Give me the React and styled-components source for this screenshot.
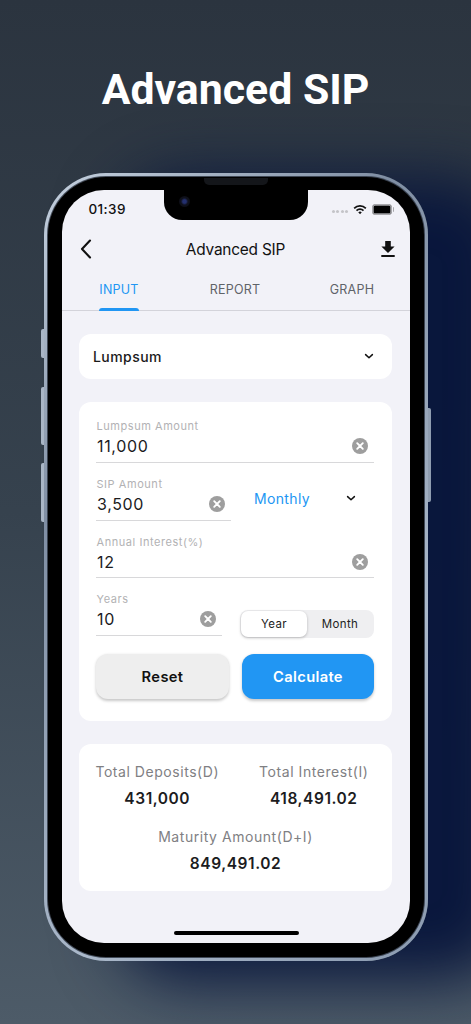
import React from 'react'
import styled, { createGlobalStyle } from 'styled-components'

const GlobalStyle = createGlobalStyle`
  html, body {
    margin: 0;
    padding: 0;
    background: #2d3640;
  }
  * {
    box-sizing: border-box;
  }
`

const BLUE = '#2196f3'

const ClearIcon = () => (
  <svg width='16' height='16' viewBox='0 0 16 16'>
    <circle cx='8' cy='8' r='8' fill='#9e9e9e' />
    <path d='M5.2 5.2l5.6 5.6M10.8 5.2l-5.6 5.6' stroke='#fff' strokeWidth='1.9' strokeLinecap='round' />
  </svg>
)

const Chevron = () => (
  <svg width='10' height='7' viewBox='0 0 10 7'>
    <path d='M1.6 1.6L5 4.8l3.4-3.2' fill='none' stroke='#111' strokeWidth='1.5' strokeLinecap='round' strokeLinejoin='round' />
  </svg>
)

const Field = ({ label, value, width }) => (
  <FieldBox $width={width}>
    <FieldLabel>{label}</FieldLabel>
    <FieldRow>
      <FieldValue>{value}</FieldValue>
      <ClearIcon />
    </FieldRow>
  </FieldBox>
)

const App = () => {
  return (
    <Page>
      <GlobalStyle />
      <Heading>Advanced SIP</Heading>
      <Frame>
        <VolumeKey $top={156} $height={29} />
        <VolumeKey $top={214} $height={58} />
        <VolumeKey $top={290} $height={59} />
        <PowerKey />
        <Bezel>
          <Speaker />
          <Screen>
            <Notch>
              <Camera />
            </Notch>
            <StatusBar>
              <Clock>01:39</Clock>
              <StatusIcons>
                <Signal>
                  <i /><i /><i /><i />
                </Signal>
                <svg width='14' height='11' viewBox='0 0 16 12'>
                  <path d='M0.6 3.9a10.4 10.4 0 0 1 14.8 0l-1.4 1.4a8.4 8.4 0 0 0-12 0z' fill='#111' />
                  <path d='M3.3 6.6a6.6 6.6 0 0 1 9.4 0l-1.4 1.4a4.6 4.6 0 0 0-6.6 0z' fill='#111' />
                  <path d='M6 9.2a2.9 2.9 0 0 1 4 0L8 11.4z' fill='#111' />
                </svg>
                <Battery />
              </StatusIcons>
            </StatusBar>
            <NavBar>
              <svg width='12' height='20' viewBox='0 0 12 20'>
                <path d='M10 1.5L2 10l8 8.5' fill='none' stroke='#111' strokeWidth='2.1' strokeLinecap='round' strokeLinejoin='round' />
              </svg>
              <NavTitle>Advanced SIP</NavTitle>
              <svg width='14' height='16' viewBox='0 0 14 16'>
                <path d='M4.2 0h5.6v5.6h3.8L7 12 .4 5.6h3.8z' fill='#111' />
                <rect x='0.3' y='14' width='13.4' height='2' fill='#111' />
              </svg>
            </NavBar>
            <Tabs>
              <Tab $active>
                INPUT
                <Indicator />
              </Tab>
              <Tab>REPORT</Tab>
              <Tab>GRAPH</Tab>
            </Tabs>
            <Content>
              <SelectCard>
                <SelectText>Lumpsum</SelectText>
                <Chevron />
              </SelectCard>
              <FormCard>
                <Field label='Lumpsum Amount' value='11,000' />
                <SplitRow>
                  <Field label='SIP Amount' value='3,500' width={135} />
                  <Frequency>
                    <FrequencyText>Monthly</FrequencyText>
                    <Chevron />
                  </Frequency>
                </SplitRow>
                <Field label='Annual Interest(%)' value='12' />
                <SplitRow>
                  <Field label='Years' value='10' width={126} />
                  <Segments>
                    <Segment $active>Year</Segment>
                    <Segment>Month</Segment>
                  </Segments>
                </SplitRow>
                <Actions>
                  <ActionButton>Reset</ActionButton>
                  <ActionButton $primary>Calculate</ActionButton>
                </Actions>
              </FormCard>
              <ResultCard>
                <Stat>
                  <StatLabel>Total Deposits(D)</StatLabel>
                  <StatValue>431,000</StatValue>
                </Stat>
                <Stat>
                  <StatLabel>Total Interest(I)</StatLabel>
                  <StatValue>418,491.02</StatValue>
                </Stat>
                <Stat $wide>
                  <StatLabel>Maturity Amount(D+I)</StatLabel>
                  <StatValue>849,491.02</StatValue>
                </Stat>
              </ResultCard>
            </Content>
            <HomeBar />
          </Screen>
        </Bezel>
      </Frame>
    </Page>
  )
}

const Page = styled.div`
  width: 471px;
  height: 1024px;
  overflow: hidden;
  padding-left: 44px;
  background: linear-gradient(180deg, #2b343f 0%, #36424e 50%, #4d5b68 100%);
  font-family: Inter, 'Noto Sans', sans-serif;
`

const Heading = styled.h1`
  margin: 0 0 0 -44px;
  height: 173px;
  padding-top: 64px;
  font-family: Roboto, sans-serif;
  font-size: 42.8px;
  line-height: 50px;
  font-weight: 700;
  color: #fff;
  text-align: center;
`

const Frame = styled.div`
  position: relative;
  width: 384px;
  height: 788px;
  padding: 4px;
  border-radius: 62px;
  background: linear-gradient(135deg, #c6d2e0 0%, #7f8ea3 30%, #aab8ca 70%, #8a9ab0 100%);
  box-shadow: 80px 12px 62px 8px rgba(8, 22, 60, 0.97);
`

const VolumeKey = styled.div`
  position: absolute;
  left: -3px;
  top: ${(p) => p.$top}px;
  width: 3px;
  height: ${(p) => p.$height}px;
  border-radius: 2px 0 0 2px;
  background: #a9b6c6;
`

const PowerKey = styled.div`
  position: absolute;
  right: -3px;
  top: 235px;
  width: 3px;
  height: 94px;
  border-radius: 0 2px 2px 0;
  background: #8f9db0;
`

const Bezel = styled.div`
  position: relative;
  height: 100%;
  padding: 13px 14px 14px;
  border-radius: 58px;
  background: #000;
  box-shadow: 0 0 0 1px rgba(40, 48, 60, 0.8);
`

const Speaker = styled.div`
  position: absolute;
  top: 1px;
  left: 156px;
  width: 64px;
  height: 7px;
  border-radius: 0 0 5px 5px;
  background: #14161a;
`

const Screen = styled.div`
  position: relative;
  display: flex;
  flex-direction: column;
  height: 100%;
  overflow: hidden;
  border-radius: 42px;
  background: #f2f2f8;
`

const Notch = styled.div`
  position: absolute;
  top: 0;
  left: 102px;
  width: 144px;
  height: 30px;
  border-radius: 0 0 18px 18px;
  background: #000;
`

const Camera = styled.div`
  position: absolute;
  top: 6px;
  left: 15px;
  width: 11px;
  height: 11px;
  border-radius: 50%;
  background: radial-gradient(circle, #24306f 0 22%, #10121e 45%, #08080c 100%);
`

const StatusBar = styled.div`
  display: flex;
  align-items: center;
  justify-content: space-between;
  height: 38px;
  padding: 0 0 0 26.5px;
`

const Clock = styled.span`
  font-size: 13.5px;
  font-weight: 500;
  letter-spacing: 0.4px;
  color: #111;
`

const StatusIcons = styled.div`
  display: flex;
  align-items: center;
  gap: 5px;
  padding-right: 18px;
`

const Signal = styled.div`
  display: flex;
  gap: 1.5px;
  margin-top: 4px;
  i {
    width: 3px;
    height: 3px;
    border-radius: 50%;
    background: #c4c4c8;
  }
`

const Battery = styled.div`
  position: relative;
  width: 20px;
  height: 11px;
  border-radius: 3px;
  border: 1px solid #a8a8ac;
  background: #000;
  box-shadow: inset 0 0 0 0.5px #f2f2f8;
  &::after {
    content: '';
    position: absolute;
    right: -3px;
    top: 2px;
    width: 1.5px;
    height: 5px;
    border-radius: 0 1px 1px 0;
    background: #a8a8ac;
  }
`

const NavBar = styled.div`
  display: flex;
  align-items: center;
  justify-content: space-between;
  height: 42px;
  padding: 0 15px 0 18px;
`

const NavTitle = styled.div`
  font-size: 15.4px;
  letter-spacing: -0.2px;
  margin-left: -2px;
  color: #111;
`

const Tabs = styled.div`
  display: grid;
  grid-template-columns: 114px 118px 116px;
  height: 41px;
  border-bottom: 1.5px solid #d3d3da;
`

const Tab = styled.div`
  position: relative;
  justify-self: center;
  height: 39.5px;
  padding-top: 12px;
  font-size: 12.5px;
  font-weight: 400;
  line-height: 16px;
  letter-spacing: 0.25px;
  color: ${(p) => (p.$active ? BLUE : '#5f6368')};
`

const Indicator = styled.div`
  position: absolute;
  left: 0;
  right: 0;
  bottom: -1px;
  height: 3px;
  border-radius: 3px 3px 0 0;
  background: ${BLUE};
`

const Content = styled.div`
  display: flex;
  flex-direction: column;
  gap: 23px;
  flex: 1;
  padding: 23px 18px 0 17px;
`

const Card = styled.div`
  border-radius: 12px;
  background: #fff;
`

const SelectCard = styled(Card)`
  display: flex;
  align-items: center;
  justify-content: space-between;
  height: 45px;
  padding: 0 18px 0 14px;
`

const SelectText = styled.span`
  font-size: 14px;
  font-weight: 500;
  letter-spacing: 0.45px;
  color: #1a1a1a;
`

const FormCard = styled(Card)`
  display: flex;
  flex-direction: column;
  gap: 14px;
  height: 319px;
  padding: 17px 18px 22px 17px;
`

const SplitRow = styled.div`
  display: flex;
  align-items: flex-start;
`

const FieldBox = styled.div`
  width: ${(p) => (p.$width ? `${p.$width}px` : '100%')};
  height: 44px;
  border-bottom: 1.5px solid #d8d8da;
`

const FieldLabel = styled.div`
  padding-left: 0.5px;
  font-size: 11px;
  line-height: 14px;
  letter-spacing: 0.55px;
  color: #b2b2b4;
`

const FieldRow = styled.div`
  display: flex;
  align-items: center;
  justify-content: space-between;
  height: 26px;
  padding: 0 6px 0 1px;
`

const FieldValue = styled.span`
  font-size: 16px;
  letter-spacing: 0.65px;
  color: #1b1b1d;
`

const Frequency = styled.div`
  display: flex;
  align-items: center;
  justify-content: space-between;
  width: 102px;
  height: 44px;
  margin-left: 23px;
`

const FrequencyText = styled.span`
  font-size: 14px;
  letter-spacing: 0.35px;
  color: ${BLUE};
`

const Segments = styled.div`
  display: flex;
  width: 134px;
  height: 28px;
  margin-left: 18px;
  margin-top: 18px;
  padding: 1px;
  border-radius: 8px;
  background: #efeff1;
`

const Segment = styled.div`
  display: flex;
  align-items: center;
  justify-content: center;
  width: 66px;
  border-radius: 7px;
  font-size: 11.5px;
  font-weight: 400;
  letter-spacing: 0.4px;
  color: #222;
  background: ${(p) => (p.$active ? '#fff' : 'transparent')};
  box-shadow: ${(p) => (p.$active ? '0 1px 3px rgba(0, 0, 0, 0.25)' : 'none')};
`

const Actions = styled.div`
  display: grid;
  grid-template-columns: 133px 132px;
  justify-content: space-between;
  margin-top: 2px;
`

const ActionButton = styled.div`
  display: flex;
  align-items: center;
  justify-content: center;
  height: 45px;
  border-radius: 12px;
  font-size: 14.7px;
  font-weight: 600;
  letter-spacing: 0.35px;
  color: ${(p) => (p.$primary ? '#fff' : '#111')};
  background: ${(p) => (p.$primary ? BLUE : '#eeeeee')};
  box-shadow: 0 1.5px 3px rgba(0, 0, 0, 0.22);
`

const ResultCard = styled(Card)`
  display: grid;
  grid-template-columns: 1fr 1fr;
  align-content: start;
  row-gap: 20px;
  height: 147px;
  padding-top: 19px;
`

const Stat = styled.div`
  display: flex;
  flex-direction: column;
  align-items: center;
  gap: 9px;
  grid-column: ${(p) => (p.$wide ? '1 / 3' : 'auto')};
`

const StatLabel = styled.div`
  font-size: 14px;
  line-height: 18px;
  letter-spacing: 0.55px;
  color: #808083;
`

const StatValue = styled.div`
  font-size: 15.5px;
  line-height: 18px;
  font-weight: 600;
  letter-spacing: 0.55px;
  color: #1c1c1e;
`

const HomeBar = styled.div`
  flex: none;
  align-self: center;
  width: 125px;
  height: 4px;
  margin-bottom: 8px;
  border-radius: 2px;
  background: #000;
`

export default App
